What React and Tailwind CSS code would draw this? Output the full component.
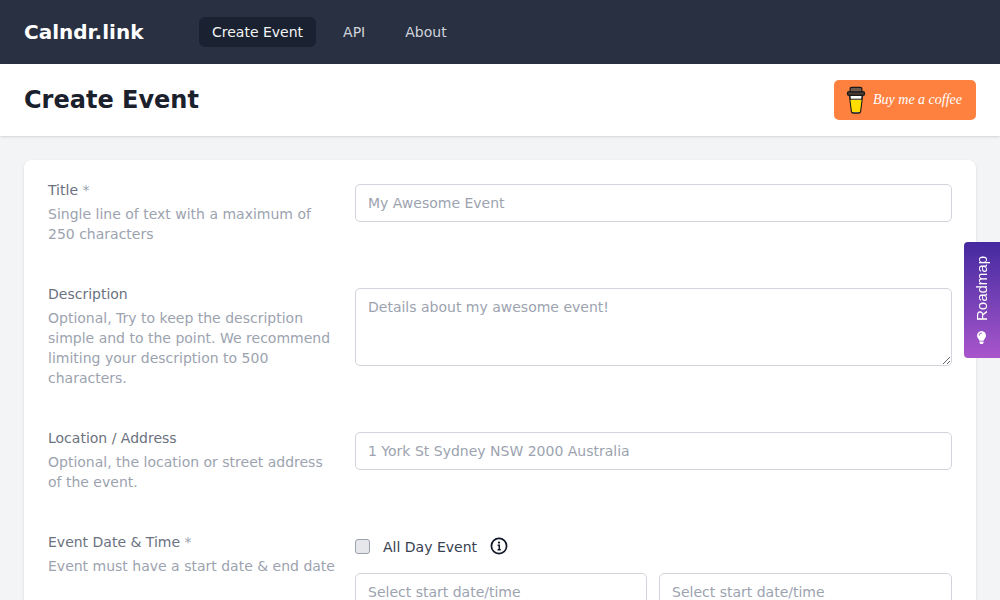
import React from 'react';
import { FaLightbulb } from 'react-icons/fa';

function Field({ label, required, help, children }) {
  return (
    <>
      <div>
        <div className="mb-2 text-sm leading-[12px] text-[#6b7280]">
          {label}
          {required && <span className="text-[#9ca3af]"> *</span>}
        </div>
        <p className="text-sm leading-5 text-[#9ca3af]">{help}</p>
      </div>
      <div>{children}</div>
    </>
  );
}

const inputCls = "block w-full h-[38px] rounded-[5px] border border-[#d1d5db] bg-white px-3 text-sm text-[#374151] placeholder:text-[#9ca3af] outline-none";

function CoffeeCup() {
  return (
    <svg width="20" height="28" viewBox="0 0 20 28" className="shrink-0">
      <path d="M3.6 9 L5.6 25.4 Q5.8 27 7.4 27 L12.6 27 Q14.2 27 14.4 25.4 L16.4 9 Z" fill="#fff" stroke="#1a1a1a" strokeWidth="1.6" strokeLinejoin="round" />
      <path d="M4.4 13.4 L5.9 25.2 Q6 26 7 26 L13 26 Q14 26 14.1 25.2 L15.6 13.4 Z" fill="#ffdd00" />
      <path d="M4.2 13.2 L15.8 13.2" stroke="#1a1a1a" strokeWidth="1" />
      <rect x="1.5" y="5.6" width="17" height="3.8" rx="1.4" fill="#4a3a32" stroke="#1a1a1a" strokeWidth="1.2" />
      <rect x="4" y="1.4" width="12" height="4.4" rx="1.8" fill="#6f5a4e" stroke="#1a1a1a" strokeWidth="1.2" />
    </svg>
  );
}

export default function App() {
  return (
    <div className="min-h-screen bg-[#f3f4f6] font-['DejaVu_Sans',sans-serif] antialiased">
      {/* Nav */}
      <nav className="flex h-16 items-center bg-[#283042] px-6">
        <a className="w-[175px] text-xl leading-7 font-bold text-white">Calndr.link</a>
        <div className="flex items-center gap-3">
          <a className="rounded-md bg-[#1a2130] px-[13px] py-[5px] text-sm leading-5 text-[#f3f4f6]">Create Event</a>
          <a className="ml-[2px] px-[13px] py-[5px] text-sm leading-5 text-[#d1d5db]">API</a>
          <a className="ml-[2px] px-[13px] py-[5px] text-sm leading-5 text-[#d1d5db]">About</a>
        </div>
      </nav>

      {/* Page header */}
      <header className="flex h-[72px] items-center justify-between bg-white px-6 shadow">
        <h1 className="text-2xl font-bold text-[#1a202c]">Create Event</h1>
        <a className="flex h-10 w-[142px] items-center gap-[7px] rounded-[5px] bg-[#ff813f] pl-3">
          <CoffeeCup />
          <span className="font-['Liberation_Serif',cursive] text-sm leading-none font-medium text-white italic">Buy me a coffee</span>
        </a>
      </header>

      {/* Form */}
      <main className="px-6 pt-6">
        <div className="grid grid-cols-[287px_597px] gap-x-5 gap-y-11 rounded-lg bg-white p-6 shadow-sm">
          <Field label="Title" required help="Single line of text with a maximum of 250 characters">
            <input className={inputCls} placeholder="My Awesome Event" />
          </Field>

          <Field label="Description" help="Optional, Try to keep the description simple and to the point. We recommend limiting your description to 500 characters.">
            <textarea className="block h-[78px] w-full rounded-[5px] border border-[#d1d5db] bg-white px-3 py-2 text-sm text-[#374151] outline-none placeholder:text-[#9ca3af]" placeholder="Details about my awesome event!" />
          </Field>

          <Field label="Location / Address" help="Optional, the location or street address of the event.">
            <input className={inputCls} placeholder="1 York St Sydney NSW 2000 Australia" />
          </Field>

          <Field label="Event Date & Time" required help="Event must have a start date & end date">
            <div className="mb-[17px] flex h-5 items-center">
              <span className="h-[15px] w-[15px] rounded-[3px] border border-[#9ca3af] bg-[#e5e7eb]" />
              <span className="ml-[13px] pt-px text-sm leading-5 text-[#374151]">All Day Event</span>
              <svg className="ml-[13px]" width="18" height="18" viewBox="0 0 18 18" fill="none">
                <circle cx="9" cy="9" r="7.6" stroke="#111827" strokeWidth="1.7" />
                <circle cx="9" cy="5.6" r="1.1" fill="#111827" />
                <path d="M7.6 8.2H9.3V12.6M7.6 12.8H10.8" stroke="#111827" strokeWidth="1.5" />
              </svg>
            </div>
            <div className="grid grid-cols-[292px_293px] gap-3">
              <input className={inputCls} placeholder="Select start date/time" />
              <input className={inputCls} placeholder="Select start date/time" />
            </div>
          </Field>
        </div>
      </main>

      {/* Roadmap tab */}
      <a className="fixed top-[242px] right-0 flex h-[116px] w-9 rotate-180 items-center justify-center gap-[10px] rounded-r-[4px] bg-gradient-to-t from-[#45289f] to-[#aa55cc] font-['Liberation_Sans',sans-serif] text-[15px] text-white [writing-mode:vertical-rl]">
        <FaLightbulb className="rotate-180" size={13} />
        <span>Roadmap</span>
      </a>
    </div>
  );
}
